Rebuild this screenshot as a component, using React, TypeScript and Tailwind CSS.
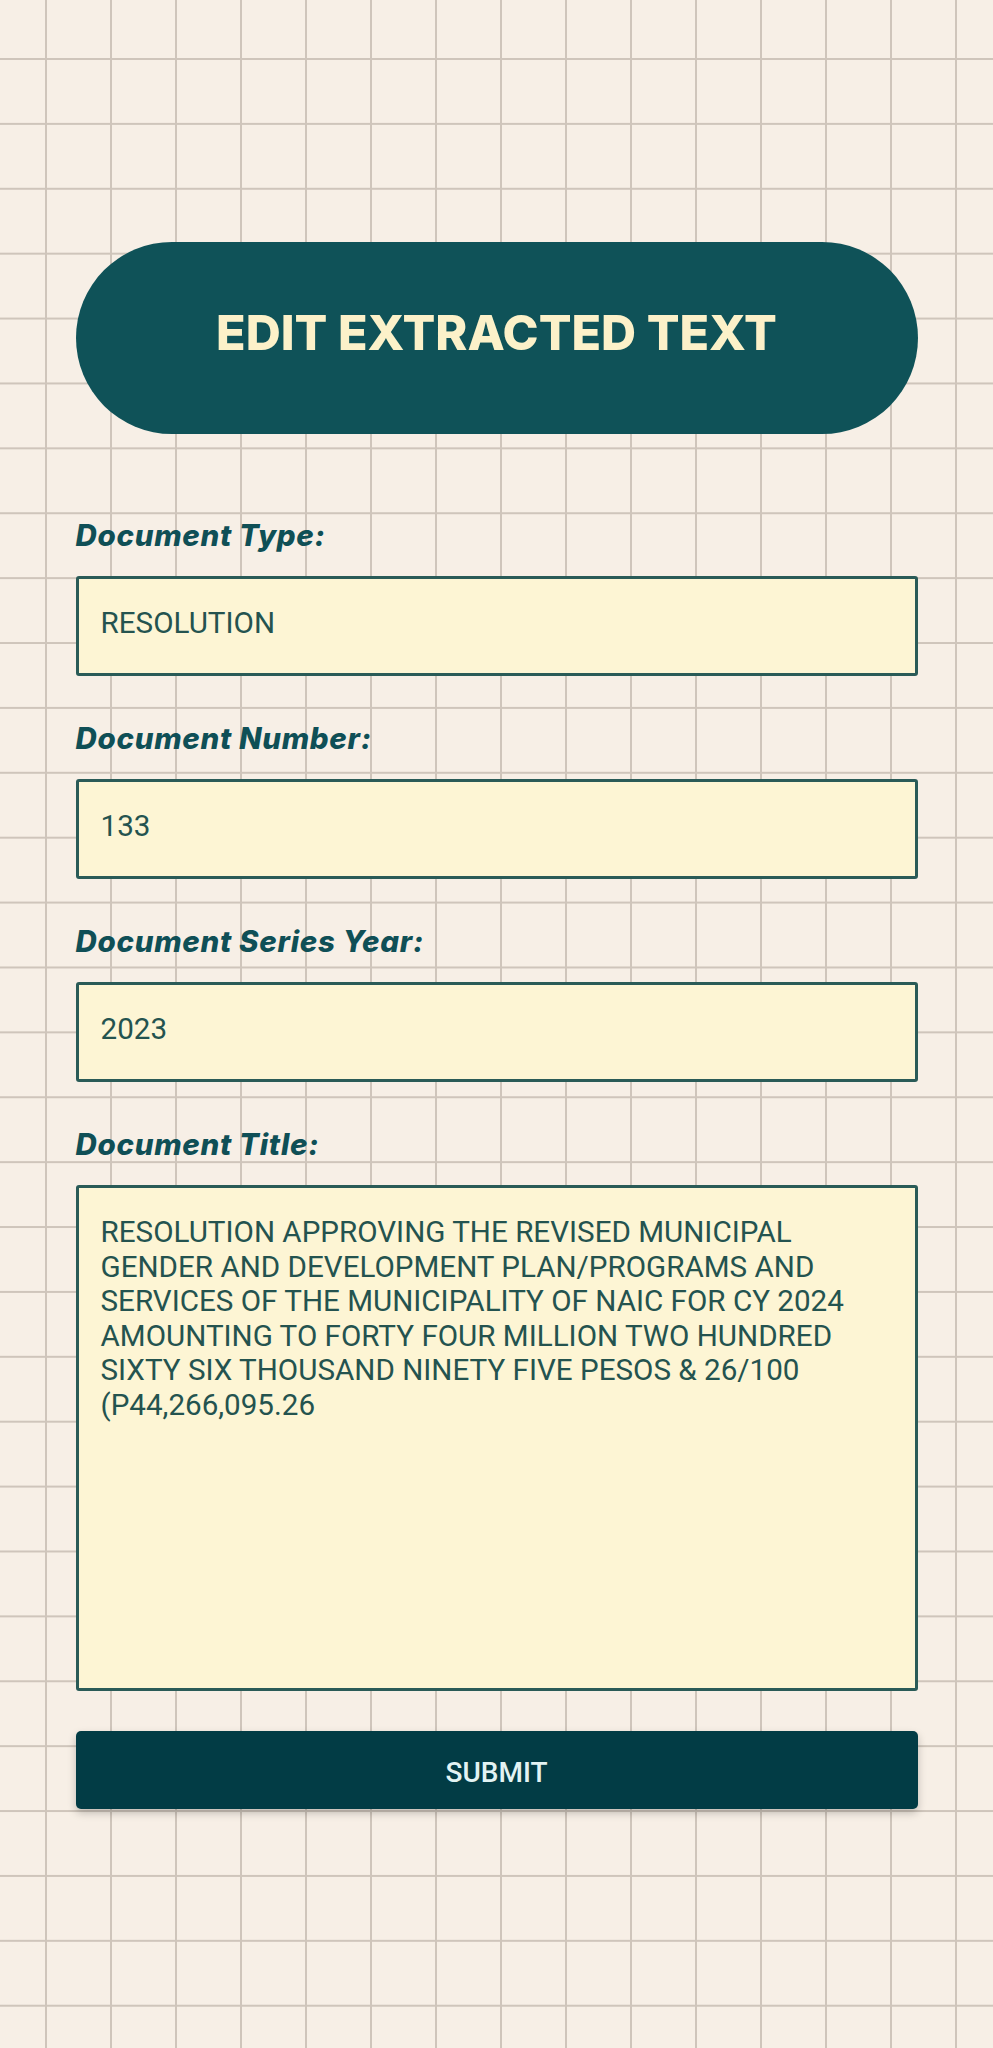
import React from "react";

const labelCls =
  "block h-[40px] leading-[40px] text-[29.5px] font-extrabold italic tracking-[0.7px] text-[#0f4f56] [font-family:Inter,'Liberation_Sans',sans-serif]";
const inputCls =
  "mt-[21px] block w-full h-[100px] border-[3px] border-[#2a5b57] rounded-[3px] bg-[#fdf5d4] pl-[22px] pr-[10px] pb-[7px] text-[29.6px] text-[#24534f] outline-none [font-family:Roboto,'Liberation_Sans',sans-serif]";

function Field({ label, value }: { label: string; value: string }) {
  return (
    <div className="flex flex-col">
      <label className={labelCls}>{label}</label>
      <input className={inputCls} defaultValue={value} />
    </div>
  );
}

const title = [
  "RESOLUTION APPROVING THE REVISED MUNICIPAL",
  "GENDER AND DEVELOPMENT PLAN/PROGRAMS AND",
  "SERVICES OF THE MUNICIPALITY OF NAIC FOR CY 2024",
  "AMOUNTING TO FORTY FOUR MILLION TWO HUNDRED",
  "SIXTY SIX THOUSAND NINETY FIVE PESOS & 26/100",
  "(P44,266,095.26",
].join("\n");

export default function App() {
  return (
    <div className="min-h-screen w-full bg-[#f7efe6] bg-[image:linear-gradient(to_right,#cfc5bb_2px,transparent_2px),linear-gradient(to_bottom,#cfc5bb_2px,transparent_2px)] bg-[size:65px_64.9px] bg-[position:45px_58px]">
      <div className="mx-auto w-[842px] pt-[242px] pb-[120px] flex flex-col">
        <div className="h-[192px] rounded-full bg-[#0f5258] flex items-center justify-center pb-[10px]">
          <h1 className="text-[48.5px] font-extrabold text-[#fcf1c9] [font-family:Inter,'Liberation_Sans',sans-serif]">
            EDIT EXTRACTED TEXT
          </h1>
        </div>
        <form className="mt-[81px] flex flex-col gap-[42px]" onSubmit={(e) => e.preventDefault()}>
          <Field label="Document Type:" value="RESOLUTION" />
          <Field label="Document Number:" value="133" />
          <Field label="Document Series Year:" value="2023" />
          <div className="flex flex-col">
            <label className={labelCls}>Document Title:</label>
            <textarea
              wrap="off"
              className="mt-[21px] block w-full h-[506px] resize-none overflow-hidden border-[3px] border-[#2a5b57] rounded-[3px] bg-[#fdf5d4] pl-[22px] pr-[8px] pt-[27px] text-[29.6px] leading-[34.5px] text-[#24534f] outline-none [font-family:Roboto,'Liberation_Sans',sans-serif]"
              defaultValue={title}
            />
          </div>
          <button
            type="submit"
            className="-mt-[2px] h-[78px] w-full rounded-[5px] bg-[#023c45] pt-[5px] text-[#e2f3f3] text-[28px] font-medium shadow-[0_4px_8px_rgba(0,0,0,0.22)] [font-family:Roboto,'Liberation_Sans',sans-serif]"
          >
            SUBMIT
          </button>
        </form>
      </div>
    </div>
  );
}
